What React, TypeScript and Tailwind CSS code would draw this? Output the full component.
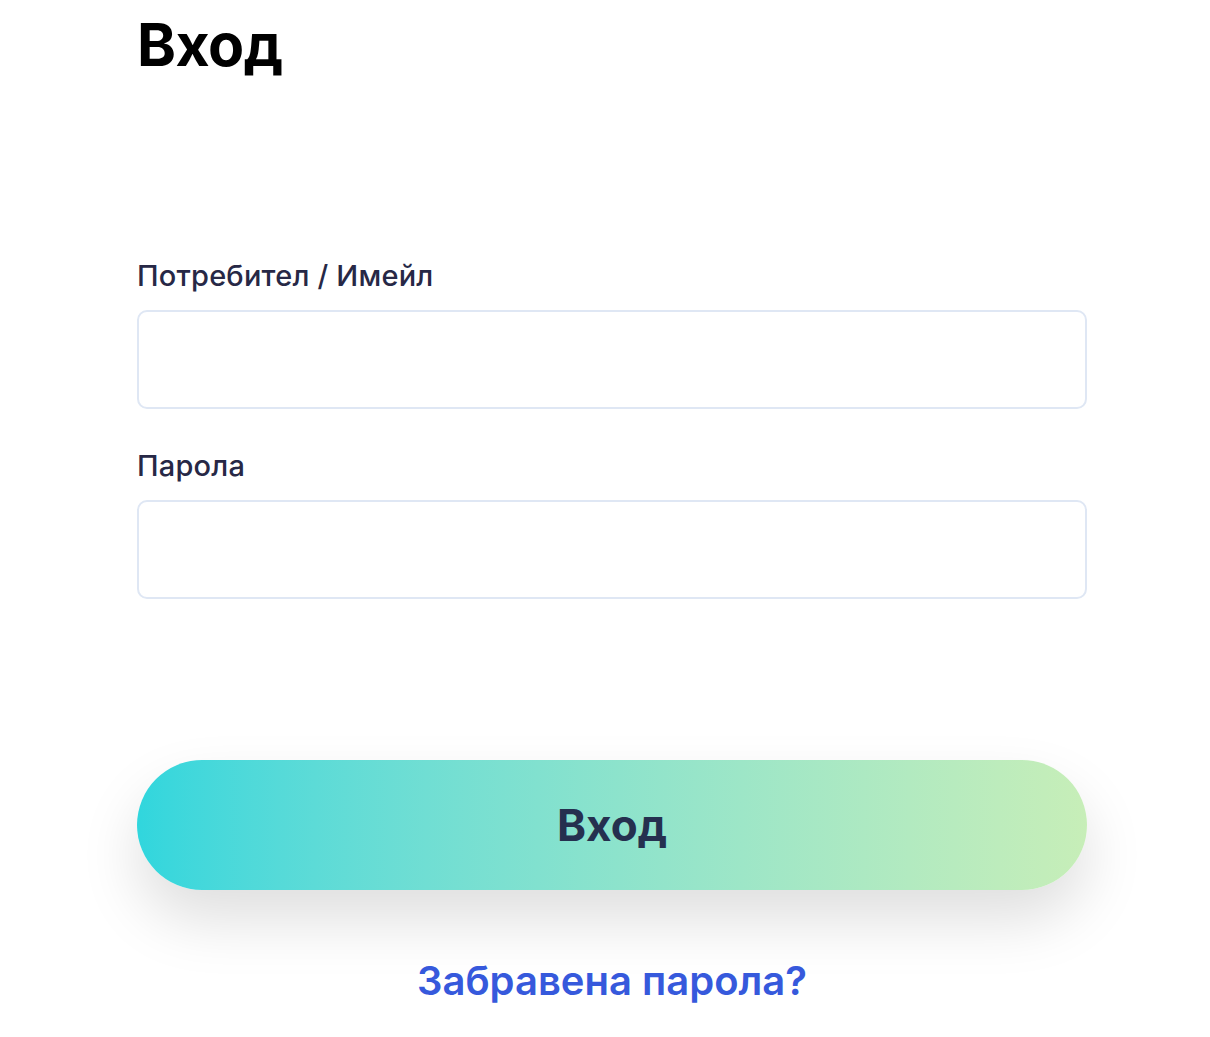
import React from 'react';

const font = { fontFamily: 'Inter, "Noto Sans", sans-serif' };

export default function App() {
  return (
    <div className="min-h-screen bg-white" style={font}>
      <div className="ml-[137px] w-[950px]">
        <h1 className="pt-[9px] text-[59px] font-bold leading-[72px] tracking-[-0.5px] text-black">Вход</h1>

        <form className="mt-[179px] flex flex-col" onSubmit={(e) => e.preventDefault()}>
          <label className="text-[29px] font-medium leading-[32px] tracking-[0.2px] text-[#272846]">Потребител / Имейл</label>
          <input
            type="text"
            className="mt-[18px] h-[99px] w-full rounded-[10px] border-2 border-[#dfe7f4] bg-white px-5 text-2xl outline-none"
          />

          <label className="mt-[41px] text-[29px] font-medium leading-[32px] tracking-[0.2px] text-[#272846]">Парола</label>
          <input
            type="password"
            className="mt-[18px] h-[99px] w-full rounded-[10px] border-2 border-[#dfe7f4] bg-white px-5 text-2xl outline-none"
          />

          <button
            type="submit"
            className="mt-[161px] h-[130px] w-full rounded-full bg-gradient-to-r from-[#30d6dd] to-[#c7eeb8] text-[44px] font-bold text-[#25304f] shadow-[0_30px_60px_rgba(0,0,0,0.13)]"
          >
            Вход
          </button>

          <a href="#" className="mt-[67px] self-center text-[40px] font-semibold leading-[48px] text-[#3659dc]">
            Забравена парола?
          </a>
        </form>
      </div>
    </div>
  );
}
